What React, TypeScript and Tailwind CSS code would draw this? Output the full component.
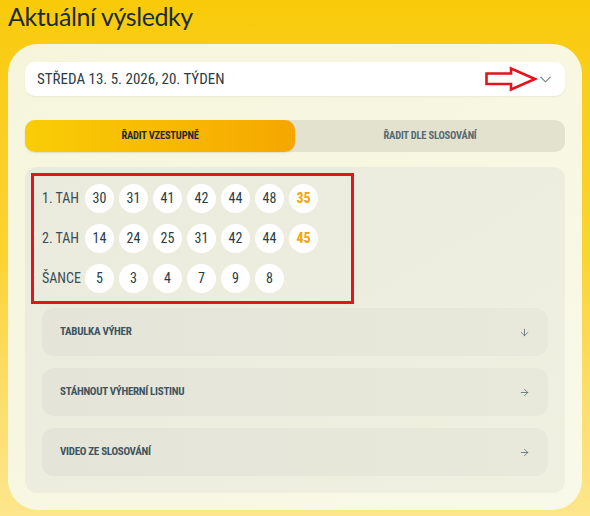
import { ArrowDown, ArrowRight } from 'lucide-react';

const draws = [
  { label: '1. TAH', nums: [30, 31, 41, 42, 44, 48], extra: 35 },
  { label: '2. TAH', nums: [14, 24, 25, 31, 42, 44], extra: 45 },
  { label: 'ŠANCE', nums: [5, 3, 4, 7, 9, 8], extra: null },
];

const links = [
  { label: 'TABULKA VÝHER', down: true },
  { label: 'STÁHNOUT VÝHERNÍ LISTINU', down: false },
  { label: 'VIDEO ZE SLOSOVÁNÍ', down: false },
];

const cond = "font-['Roboto_Condensed','Liberation_Sans_Narrow','DejaVu_Sans_Condensed',Roboto,sans-serif]";

function Ball({ value, extra }: { value: number; extra?: boolean }) {
  return (
    <div
      className={`w-[29px] h-[29px] rounded-full bg-white flex items-center justify-center text-[14px] ${cond} ${extra ? 'text-[#f5a300] font-bold' : 'text-[#2b3b44]'}`}
    >
      {value}
    </div>
  );
}

export default function App() {
  return (
    <div className="relative w-[590px] h-[516px] overflow-hidden bg-gradient-to-b from-[#f9ca08] via-[#fbd431] to-[#fde68c]">
      <h1 className="h-[44px] pl-[8px] pt-[1px] text-[25px] leading-[30px] text-[#1d2b36] font-['Lato',sans-serif] font-normal tracking-[-0.4px]">
        Aktuální výsledky
      </h1>

      <div className="mx-[8px] rounded-[30px] bg-gradient-to-br from-[#f6f5dc] to-[#f8f9e8] px-[17px] pt-[18px] pb-[17px]">
        <div className="h-[34px] rounded-[10px] bg-white flex items-center justify-between pl-[12px] pr-[14px] shadow-[0_1px_2px_rgba(0,0,0,0.06)]">
          <span className={`${cond} text-[15px] font-normal text-[#2b3c46]`}>STŘEDA 13. 5. 2026, 20. TÝDEN</span>
          <svg width="11" height="7" viewBox="0 0 11 7" className="text-[#6b7b83]">
            <polyline points="0.5,0.8 5.5,5.8 10.5,0.8" fill="none" stroke="currentColor" strokeWidth="1.1" />
          </svg>
        </div>

        <div className="mt-[24px] h-[32px] rounded-[10px] bg-[#e3e2cf] flex">
          <div className="w-[270px] rounded-[10px] bg-gradient-to-r from-[#f9cd06] to-[#f5a700] flex items-center justify-center shadow-[0_1px_2px_rgba(0,0,0,0.1)]">
            <span className={`${cond} text-[10.5px] font-bold tracking-[-0.2px] text-[#1f2a30]`}>ŘADIT VZESTUPNĚ</span>
          </div>
          <div className="flex-1 flex items-center justify-center">
            <span className={`${cond} text-[10.5px] font-bold tracking-[-0.2px] text-[#566870]`}>ŘADIT DLE SLOSOVÁNÍ</span>
          </div>
        </div>

        <div className="mt-[15px] rounded-[12px] bg-gradient-to-br from-[#ebebdd] to-[#eff0e0] px-[17px] pt-[17px] pb-[17px]">
          <div className="flex flex-col gap-[11px]">
            {draws.map((d) => (
              <div key={d.label} className="flex items-center">
                <div className={`w-[43px] ${cond} text-[14px] text-[#3a4d57]`}>{d.label}</div>
                <div className="flex gap-[5px]">
                  {d.nums.map((n, i) => (
                    <Ball key={i} value={n} />
                  ))}
                  {d.extra !== null && <Ball value={d.extra} extra />}
                </div>
              </div>
            ))}
          </div>

          <div className="mt-[15px] flex flex-col gap-[12px]">
            {links.map((l) => (
              <div
                key={l.label}
                className="h-[48px] rounded-[12px] bg-gradient-to-r from-[#e4e4d9] to-[#e8e9da] flex items-center justify-between pl-[18px] pr-[18px]"
              >
                <span className={`${cond} text-[11px] font-bold tracking-[-0.3px] text-[#3e5561]`}>{l.label}</span>
                {l.down ? (
                  <ArrowDown size={11} strokeWidth={1.6} className="text-[#4a5e68]" />
                ) : (
                  <ArrowRight size={11} strokeWidth={1.6} className="text-[#4a5e68]" />
                )}
              </div>
            ))}
          </div>
        </div>
      </div>

      {/* red annotation box */}
      <div className="absolute left-[31px] top-[173px] w-[323px] h-[131px] border-[3px] border-[#e3141d]" />

      {/* red annotation arrow */}
      <svg className="absolute left-[484px] top-[66px]" width="56" height="28" viewBox="0 0 56 28">
        <polygon
          points="2.5,7.5 27,7.5 27,2.5 51,13 27,23.5 27,18 2.5,18"
          fill="none"
          stroke="#e3141d"
          strokeWidth="2.6"
          strokeLinejoin="miter"
        />
      </svg>
    </div>
  );
}
